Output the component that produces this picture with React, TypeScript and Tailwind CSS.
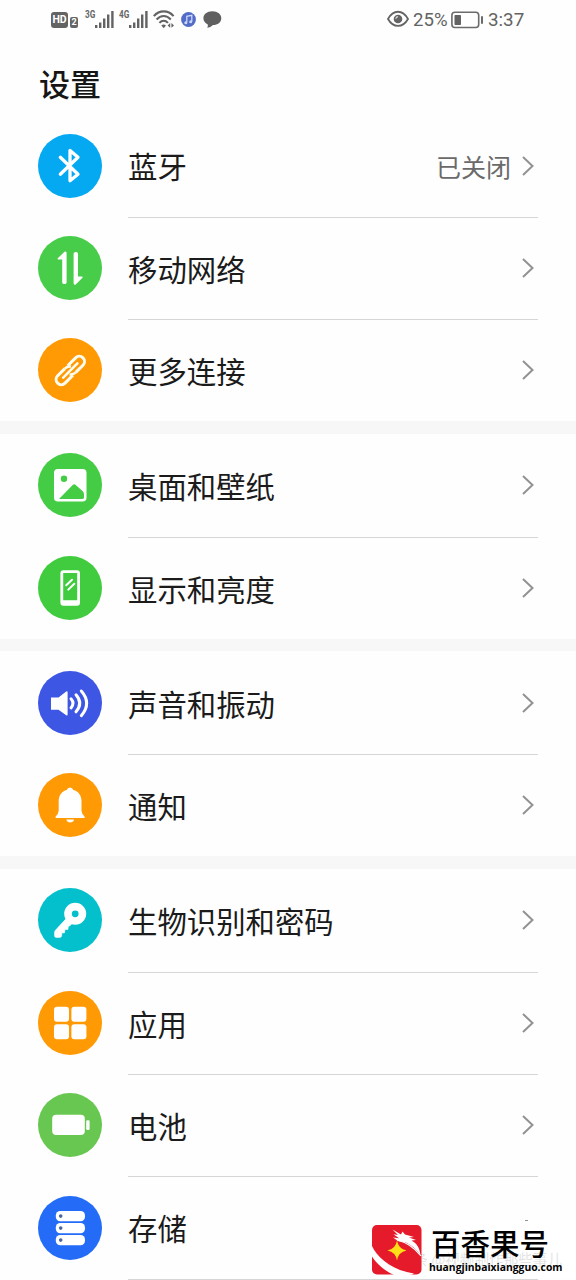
import type { ReactNode } from "react";

const cjk = "font-['Noto_Sans_CJK_SC',sans-serif]";

function Signal({ label }: { label: string }) {
  return (
    <div className="flex h-[18px] w-[29px] shrink-0 items-start">
      <span className="w-[10px] origin-left scale-x-[0.82] font-['Roboto',sans-serif] text-[10px] leading-[10px] font-bold text-[#666]">
        {label}
      </span>
      <svg className="h-[18px] w-[19px] shrink-0" viewBox="0 0 19 18" fill="#636363">
        <rect x="0" y="15" width="2.4" height="3" />
        <rect x="4" y="12.5" width="2.4" height="5.5" />
        <rect x="8" y="8.5" width="2.4" height="9.5" />
        <rect x="12" y="4.5" width="2.4" height="13.5" />
        <rect x="16.2" y="1" width="2.4" height="17" />
      </svg>
    </div>
  );
}

function StatusBar() {
  return (
    <header className="flex h-[38px] items-center pl-[51px] text-[#636363]">
      <div className="mt-0.5 flex h-4 w-[17px] items-center justify-center rounded-[3px] bg-[#636363] font-['Roboto',sans-serif] text-[10.5px] font-bold text-white">
        HD
      </div>
      <div className="mt-[7px] ml-0.5 flex h-[11px] w-2 items-center justify-center rounded-[2px] bg-[#666] font-['Roboto',sans-serif] text-[9px] font-bold text-white">
        2
      </div>
      <div className="ml-[7px]">
        <Signal label="3G" />
      </div>
      <div className="ml-[5px]">
        <Signal label="4G" />
      </div>
      <svg className="ml-[5px] h-[19px] w-[22px]" viewBox="0 0 22 19" fill="none" stroke="#636363" strokeWidth="2.1">
        <path d="M.8 6.1C6.4-.2 15-.2 20.6 6.1" />
        <path d="M3.6 9.5C7.8 4.8 13.6 4.8 17.8 9.5" />
        <path d="M6.4 12.9C9 10.1 12.4 10.1 15 12.9" />
        <path d="M8.3 15.6Q10.7 13.4 13 15.6L10.7 18.3Z" fill="#636363" stroke="none" />
        <path d="M17.2 13v4.8L14.6 15.4ZM18.4 13v4.8L21 15.4Z" fill="#636363" stroke="none" />
      </svg>
      <svg className="ml-[6px] h-[15px] w-[15px]" viewBox="0 0 15 15">
        <circle cx="7.5" cy="7.5" r="7.4" fill="#526bc7" />
        <path d="M5.8 10.5V4.3l5-1v6.2" fill="none" stroke="#cdd6fb" strokeWidth="1.3" />
        <circle cx="4.8" cy="10.7" r="1.5" fill="#cdd6fb" />
        <circle cx="9.7" cy="9.7" r="1.5" fill="#cdd6fb" />
      </svg>
      <svg className="ml-[7px] h-[17px] w-[19px]" viewBox="0 0 19 17" fill="#606060">
        <path d="M9.3.2C14.7.2 18.3 3.1 18.3 7.2S14.7 14 10 14C8.5 15.5 6.2 16.7 4.1 16.7 5 15.5 5 14.5 4.6 13.2 2 12.1.4 9.8.4 7.2.4 3.1 4 .2 9.3.2Z" />
      </svg>
      <svg className="ml-[165px] h-[18px] w-[22px]" viewBox="0 0 22 18" fill="none" stroke="#646464" strokeWidth="1.8">
        <path d="M1 9C6.2-.7 15.8-.7 21 9 15.8 18.2 6.2 18.2 1 9Z" />
        <circle cx="11" cy="9" r="4.3" fill="#646464" stroke="none" />
        <path d="M11 6.6A2.4 2.4 0 0 0 8.8 8.7" stroke="#ddd" strokeWidth="1.2" />
      </svg>
      <span className="mt-[2px] ml-[4px] w-[38px] font-['Roboto',sans-serif] text-[18.6px] leading-none whitespace-nowrap">
        25%
      </span>
      <svg className="mt-px h-[18px] w-[33px]" viewBox="0 0 33 18" fill="none">
        <rect x=".9" y="1.2" width="26.8" height="15.3" rx="3" stroke="#6b6b6b" strokeWidth="1.6" />
        <rect x="3.5" y="4" width="6.5" height="10" rx=".8" fill="#636363" />
        <rect x="30" y="5" width="2" height="8" rx="1" fill="#6b6b6b" />
      </svg>
      <span className="mt-[2px] ml-[4px] font-['Roboto',sans-serif] text-[18.8px] leading-none">3:37</span>
    </header>
  );
}

function Glyph({ children }: { children: ReactNode }) {
  return (
    <svg className="h-16 w-16" viewBox="0 0 64 64" fill="none" stroke="none">
      {children}
    </svg>
  );
}

const bluetooth = (
  <Glyph>
    <path d="M22.3 23.3 40 40.2 32 46.8V16.5L40 23.2 22.3 40.2" stroke="#fff" strokeWidth="3.3" strokeLinecap="round" strokeLinejoin="round" />
  </Glyph>
);
const mobile = (
  <Glyph>
    <path d="M28.6 17V46.5Q28.6 48 26.4 48T24.2 46.5V23.5H20.2Q19 23 20 22L26.5 15.8Q28.6 14.8 28.6 17Z" fill="#fff" />
    <path d="M35.6 17.5Q35.6 16 37.8 16T40 17.5V40.5H44Q45.2 41 44.2 42L37.7 48.4Q35.6 49.2 35.6 47.3Z" fill="#fff" />
  </Glyph>
);
const link = (
  <Glyph>
    <g transform="translate(32.3 32.5) rotate(-45)" stroke="#fffdf0" strokeWidth="3" strokeLinecap="butt">
      <path d="M-1.5 5.2H-12.7A5.2 5.2 0 0 1-12.7-5.2H-2.5" />
      <path d="M1.5-5.2H12.7A5.2 5.2 0 0 1 12.7 5.2H2.5" />
      <path d="M-10 0H10" strokeWidth="2.6" strokeLinecap="round" />
      <path d="M-2.5-5.2Q1-5.2 3.2-2.2M2.5 5.2Q-1 5.2-3.2 2.2" strokeWidth="2.4" />
    </g>
  </Glyph>
);
const picture = (
  <Glyph>
    <rect x="16" y="16" width="32.5" height="32.5" rx="3.8" fill="#fff" />
    <circle cx="26" cy="25.8" r="3.2" fill="#4c4" />
    <path d="M21 46 34.7 31.9Q36.2 30.5 37.7 31.9L44.5 38.1Q46 39.5 46 41.5V44.5Q46 46 44 46Z" fill="#4c4" />
  </Glyph>
);
const display = (
  <Glyph>
    <path fillRule="evenodd" d="M25.4 14.2H39Q42 14.2 42 17.2V46.7Q42 49.7 39 49.7H25.4Q22.4 49.7 22.4 46.7V17.2Q22.4 14.2 25.4 14.2ZM25.2 17V44.2H39.2V17Z" fill="#fff" />
    <path d="M28.2 29.3 34 23.7M30.3 33.6 36.3 27.7" stroke="#fff" strokeWidth="2" strokeLinecap="round" />
  </Glyph>
);
const sound = (
  <Glyph>
    <path d="M13 26.4H20.5L28.2 20.4Q29.6 19.6 29.6 21.2V43.5Q29.6 45.1 28.2 44.2L20.5 38.8H13Z" fill="#fff" />
    <path d="M33 27.8Q37 32.3 33 36.9M38 23.8Q45.5 32.2 38 40.8M43.3 20Q54 32.2 43.3 44.7" stroke="#fff" strokeWidth="3" strokeLinecap="round" />
  </Glyph>
);
const bell = (
  <Glyph>
    <path d="M32 14.4Q34.5 14.5 35.3 17C40.5 18.2 43.5 22.5 43.5 28V37.8Q43.7 41 46.5 43.4Q47.5 44.8 46 44.9H18.2Q16.8 44.8 17.7 43.4Q20.5 41 20.7 37.8V28C20.7 22.5 23.7 18.2 28.8 17Q29.5 14.5 32 14.4Z" fill="#fff" />
    <path d="M28.3 46.5H36.2Q35.2 49.5 32.2 49.5T28.3 46.5Z" fill="#fff" />
  </Glyph>
);
const keyIcon = (
  <Glyph>
    <circle cx="37.2" cy="25.8" r="7.2" stroke="#fff" strokeWidth="7.6" />
    <path d="M28.6 30.2 17.5 42.3Q16.7 43.1 16.7 44.2V48Q16.8 49.3 18 49.3H22.2Q23.5 49 23.6 47.6L23.7 44.7 26.3 44.9 27 41.2 29.8 41.4 30.3 38H31.5L35 34.5Z" fill="#fff" stroke="#fff" strokeWidth=".8" strokeLinejoin="round" />
  </Glyph>
);
const apps = (
  <Glyph>
    <rect x="16" y="15.8" width="15" height="15" rx="3" fill="#fff" />
    <rect x="33.4" y="15.8" width="15" height="15" rx="3" fill="#fff" />
    <rect x="16" y="33.3" width="15" height="15" rx="3" fill="#fff" />
    <rect x="33.4" y="33.3" width="15" height="15" rx="3" fill="#fff" />
  </Glyph>
);
const battery = (
  <Glyph>
    <rect x="14.2" y="21.8" width="32.6" height="20.2" rx="4" fill="#fff" />
    <rect x="48.2" y="27.2" width="3.4" height="9.8" rx="1.2" fill="#fff" />
  </Glyph>
);
const storage = (
  <Glyph>
    {[15, 27, 39].map((y) => (
      <g key={y}>
        <rect x="17.8" y={y} width="29.2" height="10.2" rx="4.4" fill="#fff" />
        <circle cx="22.7" cy={y + 5.1} r="1.8" fill="#47649b" />
      </g>
    ))}
  </Glyph>
);

type Item = { label: string; color: string; icon: ReactNode; value?: string; covered?: boolean };

const sections: Item[][] = [
  [
    { label: "蓝牙", color: "bg-[#05a9f2]", icon: bluetooth, value: "已关闭" },
    { label: "移动网络", color: "bg-[#47cd49]", icon: mobile },
    { label: "更多连接", color: "bg-[#ff9a05]", icon: link },
  ],
  [
    { label: "桌面和壁纸", color: "bg-[#44cc44]", icon: picture },
    { label: "显示和亮度", color: "bg-[#41cc40]", icon: display },
  ],
  [
    { label: "声音和振动", color: "bg-[#3d56e4]", icon: sound },
    { label: "通知", color: "bg-[#ff9a05]", icon: bell },
  ],
  [
    { label: "生物识别和密码", color: "bg-[#03c0cc]", icon: keyIcon },
    { label: "应用", color: "bg-[#ff9a05]", icon: apps },
    { label: "电池", color: "bg-[#68c750]", icon: battery },
    { label: "存储", color: "bg-[#246cf7]", icon: storage, covered: true },
  ],
];

function Row({ item, divider }: { item: Item; divider: boolean }) {
  return (
    <div className="flex h-[102.4px] pl-[38px]">
      <div className={`mt-[18.2px] h-16 w-16 shrink-0 rounded-full ${item.color}`}>{item.icon}</div>
      <div
        className={`mr-[38px] ml-[26px] flex flex-1 items-center border-b ${divider ? "border-[#d6d6d6]" : "border-transparent"}`}
      >
        <span className="flex-1 text-[29.4px] leading-none text-[#1b1b1b]">{item.label}</span>
        {item.value && <span className="mr-[9px] text-[25px] leading-none text-[#6a6a6a]">{item.value}</span>}
        {!item.covered && (
          <svg className="mr-[2px] mb-[1px] h-[22px] w-[16px]" viewBox="0 0 16 22" fill="none" stroke="#929292" strokeWidth="2">
            <path d="M3 2 12.5 11 3 20" />
          </svg>
        )}
        {item.covered && <div className="mr-[10px] mb-[15px] h-px w-[3px] bg-[#929292]" />}
      </div>
    </div>
  );
}

function Watermark() {
  return (
    <div className="absolute top-[1221px] left-[369px] flex h-[57px] w-[207px] bg-white pt-1 pl-[3px]">
      <span className="absolute top-[31px] left-[30px] text-[14.6px] leading-none whitespace-nowrap text-[#777] opacity-20">
        头条 @视频制作那些事儿
      </span>
      <svg className="relative h-[50px] w-[50px] shrink-0" viewBox="0 0 50 50">
        <rect width="49.5" height="49.5" rx="5" fill="#e51a2b" />
        <path d="M0 21C5 32 19 45 42 48.5Q40 50 36 50H22C12 45.5 4 38 0 31.5Z" fill="#fff" />
        <path d="M20.5 4.5 29 9.5 30.5 6.5 33 9.6 42 12 37 12.5 44 15 39.5 15.6C45 18.5 47.5 23 48.5 30 44.5 24.5 40 20.5 34 17.5L26 16 21 12.5 27 13.3 21.5 9.3 26 10Z" fill="#fff" />
        <path d="M25 15C34 17.5 41 21 49 31" fill="none" stroke="#fff" strokeWidth="1.2" />
        <path d="M25 15.5Q26.4 24 34.5 25.5 26.4 27 25 35.5 23.6 27 15.5 25.5 23.6 24 25 15.5Z" fill="#ffdf18" />
      </svg>
      <div className="relative ml-[7px] flex w-[140px] flex-col">
        <span className="mt-[-1px] h-[37px] pl-[2px] text-[29.5px] leading-[37px] font-medium whitespace-nowrap text-black">
          百香果号
        </span>
        <span className="font-['Open_Sans',sans-serif] text-[10.35px] leading-[13px] font-bold whitespace-nowrap text-black">
          huangjinbaixiangguo.com
        </span>
      </div>
    </div>
  );
}

export default function App() {
  return (
    <main className={`relative h-[1280px] w-[576px] overflow-hidden bg-[#fefefe] ${cjk}`}>
      <StatusBar />
      <h1 className="flex h-[77.4px] items-start pt-[28.5px] pl-[39px] text-[31px] leading-[31px] font-medium text-[#161616]">
        设置
      </h1>
      {sections.map((items, s) => (
        <section key={s}>
          {s > 0 && <div className="-mt-[1.5px] mb-[1.5px] h-[12.7px] bg-[#f7f7f7]" />}
          {items.map((item, i) => (
            <Row key={item.label} item={item} divider={s === 3 || i < items.length - 1} />
          ))}
        </section>
      ))}
      <Watermark />
    </main>
  );
}
